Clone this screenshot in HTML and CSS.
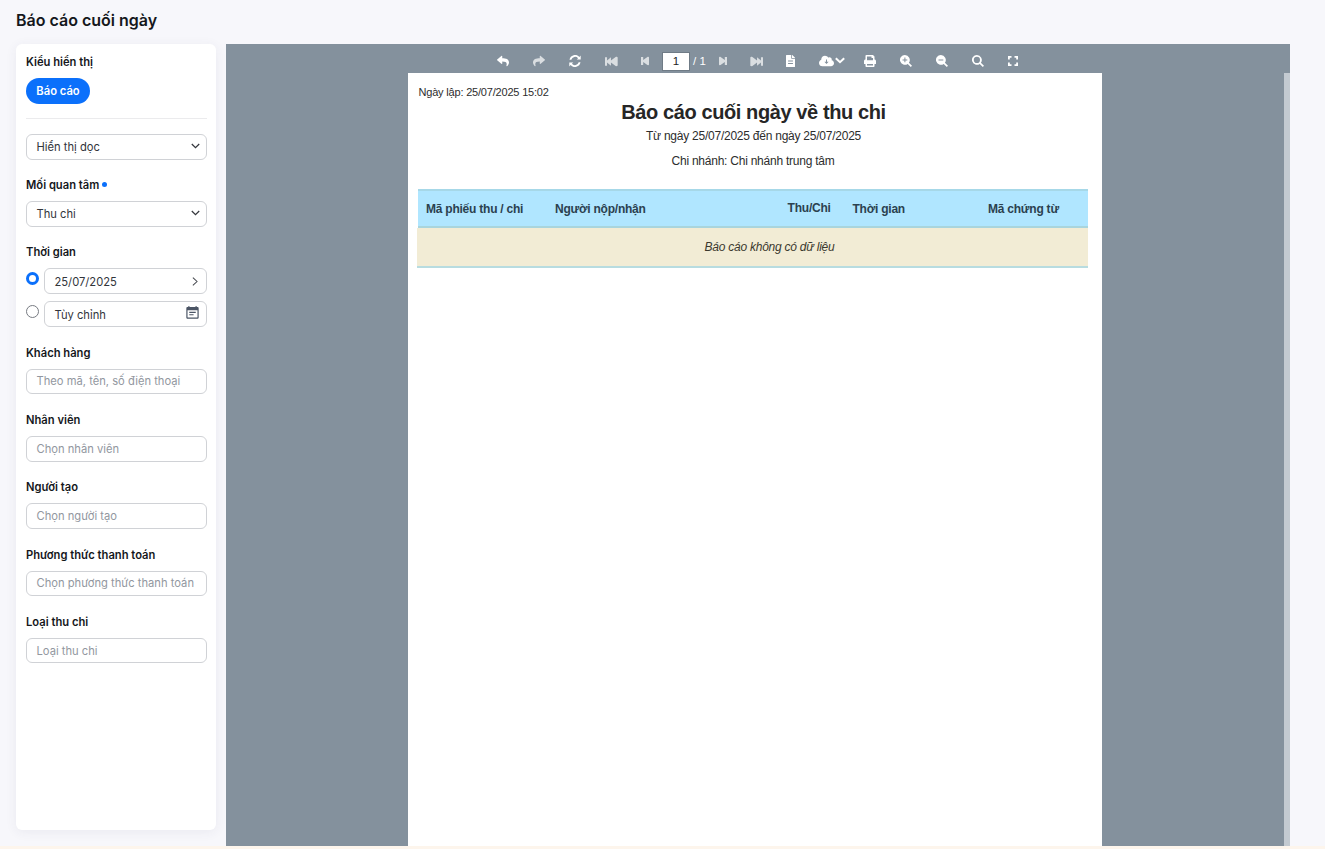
FILE: index.html
```html
<!DOCTYPE html>
<html lang="vi">
<head>
<meta charset="utf-8">
<title>Báo cáo cuối ngày</title>
<link rel="stylesheet" href="styles.css">
</head>
<body>
<h1 class="page-title">Báo cáo cuối ngày</h1>
<main class="layout">
  <aside class="sidebar">
    <section class="display-type">
      <h2 class="label">Kiểu hiển thị</h2>
      <button class="pill">Báo cáo</button>
    </section>
    <div class="field select first"><span>Hiển thị dọc</span><svg class="chev" viewBox="0 0 8 5"><path d="M.7.7 4 4 7.3.7"/></svg></div>
    <section class="group">
      <h2 class="label">Mối quan tâm<i class="dot"></i></h2>
      <div class="field select"><span>Thu chi</span><svg class="chev" viewBox="0 0 8 5"><path d="M.7.7 4 4 7.3.7"/></svg></div>
    </section>
    <section class="group">
      <h2 class="label">Thời gian</h2>
      <div class="radio-row"><i class="radio on"></i><div class="field grow"><span>25/07/2025</span><svg class="chev-right" viewBox="0 0 5 8"><path d="M.6.6 4.3 4 .6 7.4"/></svg></div></div>
      <div class="radio-row"><i class="radio"></i><div class="field grow"><span>Tùy chỉnh</span><svg class="calendar" viewBox="0 0 12 12"><path fill-rule="evenodd" d="M2 .3h1.300V1h5.400V.3H10V1h.5c.7 0 1.200.5 1.200 1.200v8.300c0 .7-.5 1.200-1.200 1.200h-9C.8 11.700.3 11.200.3 10.500V2.200C.3 1.500.8 1 1.500 1H2zM1.400 4v6.200c0 .3.200.5.500.500h8.200c.3 0 .5-.2.500-.5V4zM3 5.400h6v1H3zm0 2.200h4v1H3z"/></svg></div></div>
    </section>
    <section class="group">
      <h2 class="label">Khách hàng</h2>
      <div class="field hint"><span>Theo mã, tên, số điện thoại</span></div>
    </section>
    <section class="group">
      <h2 class="label">Nhân viên</h2>
      <div class="field hint"><span>Chọn nhân viên</span></div>
    </section>
    <section class="group">
      <h2 class="label">Người tạo</h2>
      <div class="field hint"><span>Chọn người tạo</span></div>
    </section>
    <section class="group">
      <h2 class="label">Phương thức thanh toán</h2>
      <div class="field hint"><span>Chọn phương thức thanh toán</span></div>
    </section>
    <section class="group">
      <h2 class="label">Loại thu chi</h2>
      <div class="field hint"><span>Loại thu chi</span></div>
    </section>
  </aside>
  <section class="viewer">
    <nav class="toolbar">
      <span class="tool"><svg width="12" height="12" viewBox="0 0 512 512"><path d="M8.300 189.800 184.300 37.900C199.700 24.500 224 35.300 224 56v80.100C384.600 137.900 512 170.100 512 322.300c0 61.400-39.600 122.300-83.300 154.100-13.700 9.900-33.100-2.500-28.100-18.600C445.900 312.800 379.100 274.300 224 272v88c0 20.700-24.300 31.500-39.700 18.200L8.300 226.200c-11.100-9.600-11.100-26.800 0-36.400z"/></svg></span>
      <span class="tool off"><svg width="12" height="12" viewBox="0 0 512 512"><path transform="matrix(-1 0 0 1 512 0)" d="M8.300 189.800 184.300 37.900C199.700 24.500 224 35.300 224 56v80.100C384.600 137.900 512 170.100 512 322.300c0 61.400-39.600 122.300-83.300 154.100-13.700 9.900-33.100-2.500-28.100-18.600C445.900 312.800 379.100 274.300 224 272v88c0 20.700-24.300 31.500-39.700 18.200L8.300 226.200c-11.100-9.600-11.100-26.800 0-36.400z"/></svg></span>
      <span class="tool"><svg width="12" height="12" viewBox="0 0 12 12"><path d="M11.700.6v4H7.700l1.400-1.400A4 4 0 0 0 2.300 4.700H.5A5.700 5.700 0 0 1 10.400 1.900zM.3 11.400v-4h4L2.900 8.800a4 4 0 0 0 6.800-1.500h1.800a5.700 5.700 0 0 1-9.900 2.800z"/></svg></span>
      <span class="tool off"><svg width="13" height="11" viewBox="0 0 12 10"><path d="M0 1h1.900v3L5.500 1v3L9.800.9c.7-.5 1.900-.1 1.900.6v7c0 .7-1.200 1.100-1.900.6L5.500 6v3L1.900 6v3H0z"/></svg></span>
      <span class="tool narrow off"><svg width="8" height="10" viewBox="0 0 8 10"><path d="M0 1h2.200v3L6.400.9c.6-.4 1.600 0 1.600.6v7c0 .6-1 1-1.600.6L2.200 6v3H0z"/></svg></span>
      <span class="page-no">1</span><span class="page-total">/ 1</span>
      <span class="tool next off"><svg width="8" height="10" viewBox="0 0 8 10"><path transform="matrix(-1 0 0 1 8 0)" d="M0 1h2.200v3L6.400.9c.6-.4 1.600 0 1.600.6v7c0 .6-1 1-1.600.6L2.200 6v3H0z"/></svg></span>
      <span class="tool last off"><svg width="13" height="11" viewBox="0 0 12 10"><path transform="matrix(-1 0 0 1 12 0)" d="M0 1h1.900v3L5.500 1v3L9.800.9c.7-.5 1.900-.1 1.900.6v7c0 .7-1.200 1.100-1.900.6L5.500 6v3L1.900 6v3H0z"/></svg></span>
      <span class="tool short"><svg width="9" height="12" viewBox="0 0 384 512"><path fill-rule="evenodd" d="M224 136V0H24C10.700 0 0 10.700 0 24v464c0 13.300 10.700 24 24 24h336c13.300 0 24-10.700 24-24V160H248c-13.200 0-24-10.800-24-24zM88 235h208v42H88zm0 110h208v42H88zM384 122v6H256V0h6c6 0 12 2.500 17 7l98 98c4.500 4.500 7 10.600 7 17z"/></svg></span>
      <span class="tool export"><svg width="15" height="12" viewBox="0 0 640 512"><path fill-rule="evenodd" d="M537.600 226.600c4.100-10.700 6.400-22.400 6.400-34.600 0-53-43-96-96-96-19.700 0-38.100 6-53.300 16.200C367 64.200 315.300 32 256 32c-88.400 0-160 71.600-160 160 0 2.700.1 5.400.2 8.100C40.200 219.800 0 273.200 0 336c0 79.500 64.500 144 144 144h368c70.700 0 128-57.300 128-128 0-61.900-44-113.600-102.400-125.400zM299 190h42v100h70L320 380 229 290h70z"/></svg><svg class="menu-arrow" width="10" height="7" viewBox="0 0 10 7"><path d="m.8 1.200 4.200 4 4.200-4"/></svg></span>
      <span class="tool"><svg width="12" height="12" viewBox="0 0 512 512"><path fill-rule="evenodd" d="M448 192V77c0-8-4-17-10-23L394 10c-6-6-14-10-23-10H96C78 0 64 14 64 32v160c-35 0-64 29-64 64v112c0 9 7 16 16 16h48v96c0 18 14 32 32 32h320c18 0 32-14 32-32v-96h48c9 0 16-7 16-16V256c0-35-29-64-64-64zM384 448H128v-64h256zm0-224H128V64h192v48c0 9 7 16 16 16h48z"/></svg></span>
      <span class="tool"><svg width="12" height="12" viewBox="0 0 12 12"><path fill-rule="evenodd" d="M4.900 0a4.900 4.900 0 0 1 4 7.700l3.100 3.100L10.800 12 7.700 8.900A4.900 4.900 0 1 1 4.900 0zm-.5 2.500v1.900H2.500v1h1.900v1.900h1V5.400h1.900v-1H5.400V2.500z"/></svg></span>
      <span class="tool"><svg width="12" height="12" viewBox="0 0 12 12"><path fill-rule="evenodd" d="M4.900 0a4.900 4.900 0 0 1 4 7.700l3.100 3.100L10.800 12 7.700 8.900A4.900 4.900 0 1 1 4.900 0zM2.500 4.400v1h4.800v-1z"/></svg></span>
      <span class="tool short"><svg width="12" height="12" viewBox="0 0 12 12"><path fill-rule="evenodd" d="M4.900 0a4.900 4.900 0 0 1 4 7.700l3.100 3.100L10.800 12 7.700 8.900A4.900 4.900 0 1 1 4.900 0zm0 1.800a3.100 3.100 0 1 0 0 6.200 3.100 3.100 0 0 0 0-6.200z"/></svg></span>
      <span class="tool"><svg width="10" height="10" viewBox="0 0 10 10"><path d="M0 0h3.500v1.800H1.800v1.700H0zM6.500 0H10v3.500H8.200V1.800H6.500zM0 6.500h1.800v1.700h1.700V10H0zM8.200 6.500H10V10H6.500V8.200h1.700z"/></svg></span>
    </nav>
    <div class="stage">
      <article class="paper">
        <p class="created">Ngày lập: 25/07/2025 15:02</p>
        <h2 class="report-title">Báo cáo cuối ngày về thu chi</h2>
        <p class="range">Từ ngày 25/07/2025 đến ngày 25/07/2025</p>
        <p class="branch">Chi nhánh: Chi nhánh trung tâm</p>
        <div class="table">
          <div class="thead"><span>Mã phiếu thu / chi</span><span>Người nộp/nhận</span><span class="amount">Thu/Chi</span><span>Thời gian</span><span>Mã chứng từ</span></div>
          <div class="empty">Báo cáo không có dữ liệu</div>
        </div>
      </article>
      <div class="scrollbar"></div>
    </div>
  </section>
</main>
</body>
</html>
```
FILE: styles.css
```css
* { box-sizing: border-box; }
body { margin: 0; height: 849px; overflow: hidden; display: flex; flex-direction: column; background: #f7f7fb; border-bottom: 3px solid #fdf5ec; font-family: Inter, "Noto Sans", sans-serif; color: #15171c; }
h1, h2, p { margin: 0; }
.page-title { height: 44px; padding: 10px 0 0 16px; font-size: 16px; line-height: 20px; font-weight: 600; }
.layout { display: flex; gap: 10px; padding-left: 16px; height: 802px; }
.sidebar { width: 200px; height: 786px; padding: 10px 9px 0 10px; background: #fff; border-radius: 6px; box-shadow: 0 2px 12px #3c3c6412; }
.label { height: 16px; margin-bottom: 8px; font-size: 11.200px; line-height: 16px; font-weight: 600; white-space: nowrap; }
.display-type { height: 65px; border-bottom: 1px solid #ebebed; margin-bottom: 15px; }
.pill { display: block; width: 64px; height: 26px; padding: 0; border: 0; border-radius: 13px; background: #0b70fb; color: #fff; font: 600 11.200px/26px Inter, sans-serif; }
.field { height: 25.600px; padding: 0 6px 0 9.500px; border: 1px solid #d0d2d6; border-radius: 6px; background: #fff; display: flex; align-items: center; justify-content: space-between; font-size: 11.200px; line-height: 16px; color: #32353b; white-space: nowrap; }
.field.first { margin-bottom: 17.400px; }
.group { margin-bottom: 17.730px; }
.hint { color: #9297a0; }
.dot { display: inline-block; width: 5px; height: 5px; margin: 0 0 2px 3px; border-radius: 50%; background: #0b70fb; }
.chev { width: 9px; height: 6px; margin-bottom: 2px; fill: none; stroke: #34373d; stroke-width: 1.100; }
.chev-right { width: 6px; height: 9px; margin-right: 2px; fill: none; stroke: #45484e; stroke-width: .9; }
.calendar { width: 13px; height: 13px; margin: 0 1px 3px 0; fill: #4b5565; }
.radio-row { display: flex; gap: 5px; }
.radio-row .field span { padding-top: 1px; }
.radio-row + .radio-row { margin-top: 7.400px; }
.radio { width: 13px; height: 13px; margin-top: 4px; border: 1px solid #777b82; border-radius: 50%; background: #fff; }
.radio.on { border: 3px solid #0b70fb; }
.grow { flex: 1; }
.viewer { width: 1064px; background: #84919d; display: flex; flex-direction: column; }
.toolbar { height: 29px; padding: 5px 0 0 259px; display: flex; align-items: center; }
.tool { width: 36px; display: flex; justify-content: center; align-items: center; fill: #fff; }
.off { opacity: .7; }
.narrow { width: 32px; margin-right: 1px; }
.page-no { width: 28px; height: 19px; margin-top: 1px; border: 1px solid #6f7b86; background: #fff; color: #222; text-align: center; font: 11.500px/17px "Liberation Sans", sans-serif; }
.page-total { width: 16px; padding-left: 3px; color: #fff; font: 11.500px/18px "Liberation Sans", sans-serif; white-space: nowrap; }
.next { width: 33px; }
.last { width: 34px; }
.short { width: 35px; }
.export { width: 44px; padding-left: 4px; gap: 1px; }
.menu-arrow { margin-bottom: 2px; fill: none; stroke: #fff; stroke-width: 2; }
.stage { flex: 1; display: flex; justify-content: space-between; padding-left: 182px; }
.paper { width: 694px; background: #fff; padding: 12px 14px 0 9px; font-family: "Liberation Sans", Arial, sans-serif; color: #2d2d2d; }
.created { padding-left: 1.500px; font-size: 11px; letter-spacing: -.19px; line-height: 15px; }
.report-title { padding-left: 2px; margin-top: 1px; text-align: center; font-size: 20px; letter-spacing: -.4px; line-height: 23px; color: #262626; }
.range, .branch { padding-left: 2px; font-size: 12px; letter-spacing: -.24px; line-height: 16px; text-align: center; }
.branch { padding-left: 1px; }
.range { margin-top: 4px; }
.branch { margin-top: 9px; }
.table { margin-top: 20px; }
.thead { display: grid; grid-template-columns: 129px 232.500px 65px 135.500px 1fr; align-items: center; height: 39px; margin-left: 1px; padding-left: 8px; border-top: 2px solid #a6d8e8; border-bottom: 2px solid #a9d5dd; background: #b0e6ff; font-size: 12px; letter-spacing: -.23px; font-weight: 700; color: #2b414f; }
.amount { padding-bottom: 2px; letter-spacing: -.2px; }
.empty { height: 40px; padding-left: 34px; border-bottom: 2px solid #b8dce0; background: #f2ecd5; font-size: 12px; letter-spacing: -.24px; line-height: 38px; font-style: italic; text-align: center; color: #3b392f; }
.scrollbar { width: 6px; background: #c3cad1; }
```
